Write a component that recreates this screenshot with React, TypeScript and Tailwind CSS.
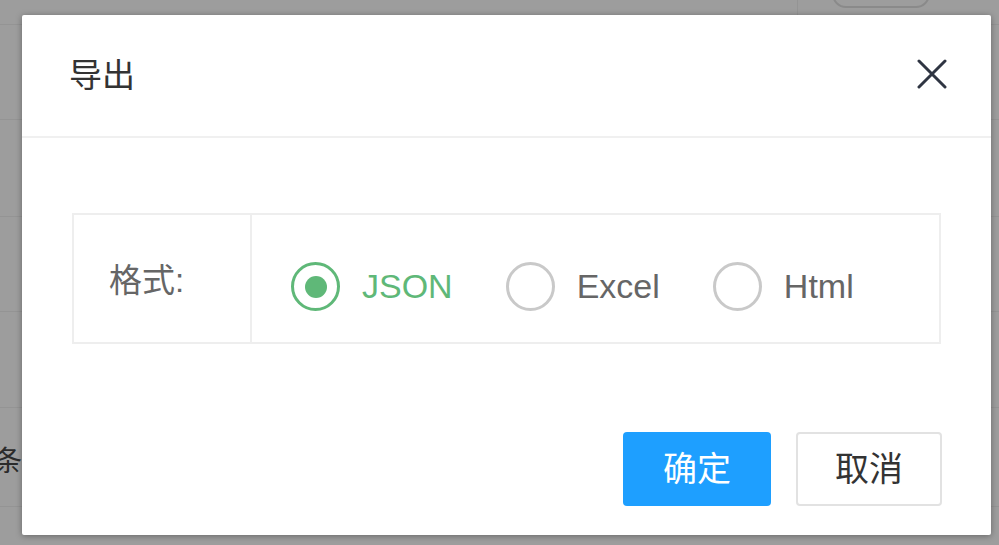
import * as React from 'react';

const FONT = '"Liberation Sans", "Noto Sans CJK SC", sans-serif';

interface RadioProps {
  readonly label: string;
  readonly checked?: boolean;
}

function Radio(props: RadioProps): React.ReactNode {
  const { label, checked } = props;
  return (
    <div className="flex items-center gap-[22px]">
      <span
        className={
          checked
            ? 'flex h-[49px] w-[49px] items-center justify-center rounded-full border-[3px] border-[#5fb878]'
            : 'flex h-[49px] w-[49px] items-center justify-center rounded-full border-[3px] border-[#c9c9c9]'
        }
      >
        { checked && <span className="h-[22px] w-[22px] rounded-full bg-[#5fb878]"/> }
      </span>
      <span className={ checked ? 'text-[34px] text-[#5fb878]' : 'text-[34px] text-[#666]' }>
        { label }
      </span>
    </div>
  );
}

function CloseIcon(): React.ReactNode {
  return (
    <svg width="30" height="30" viewBox="0 0 30 30" className="mt-[-4px] block">
      <path d="M2 2 L28 28 M28 2 L2 28" stroke="#2f3542" strokeWidth="3" strokeLinecap="round"/>
    </svg>
  );
}

export default function App(): React.ReactNode {
  return (
    <div
      className="relative h-[545px] w-[999px] overflow-hidden bg-[#9d9d9d]"
      style={{ fontFamily: FONT }}
    >
      {/* page beneath the overlay */}
      <div className="flex flex-col">
        <div className="flex h-[25px] border-b border-[#949494]">
          <div className="w-[798px] border-r border-[#949494]"/>
          <div className="ml-[34px] mt-[-20px] h-[28px] w-[98px] rounded-[14px] border-2 border-[#8a8a8a]"/>
        </div>
        <div className="h-[95px] border-b border-[#949494]"/>
        <div className="h-[97px] border-b border-[#949494]"/>
        <div className="h-[95px] border-b border-[#949494]"/>
        <div className="h-[96px] border-b border-[#949494]"/>
        <div className="flex h-[99px] items-center border-b border-[#949494]">
          <span className="ml-[-6px] mt-[10px] text-[28px] text-[#2b2b2b]">条</span>
        </div>
      </div>

      {/* dialog */}
      <div className="absolute left-[22px] top-[15px] flex h-[520px] w-[969px] flex-col rounded-[2px] bg-white shadow-[0_1px_6px_rgba(0,0,0,0.35)]">
        <div className="flex h-[123px] items-center justify-between border-b-2 border-[#f0f0f0] pl-[47px] pr-[44px]">
          <span className="text-[33px] text-[#333]">导出</span>
          <CloseIcon/>
        </div>

        <div className="px-[50px] pt-[75px]">
          <div className="flex h-[131px] border-2 border-[#eee]">
            <div className="flex w-[178px] items-center border-r-2 border-[#eee] pl-[35px] pt-[4px] text-[33px] text-[#666]">
              格式:
            </div>
            <div className="flex items-center gap-[53px] pl-[39px] pt-[16px]">
              <Radio label="JSON" checked/>
              <Radio label="Excel"/>
              <Radio label="Html"/>
            </div>
          </div>
        </div>

        <div className="mt-auto flex justify-end gap-[25px] pb-[29px] pr-[49px]">
          <button className="h-[74px] w-[148px] rounded-[4px] bg-[#1e9fff] text-[34px] text-white">
            确定
          </button>
          <button className="h-[74px] w-[146px] rounded-[4px] border-2 border-[#e2e2e2] bg-white text-[34px] text-[#333]">
            取消
          </button>
        </div>
      </div>
    </div>
  );
}
